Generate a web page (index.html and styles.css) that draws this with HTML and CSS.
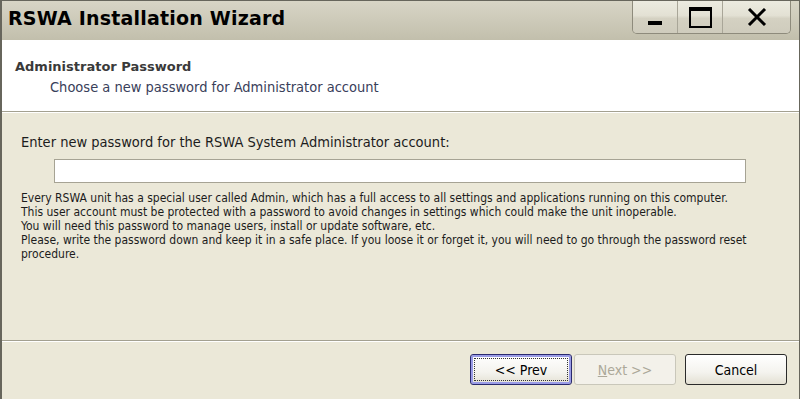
FILE: index.html
```html
<!DOCTYPE html>
<html lang="en">

<head>
    <meta charset="UTF-8">
    <title>RSWA Installation Wizard</title>
    <link rel="stylesheet" href="styles.css">
</head>

<body>

    <div class="window">

        <!-- Title bar -->
        <div class="titlebar">
            <h1 class="title">RSWA Installation Wizard</h1>
            <div class="caption-buttons">
                <div class="caption-btn min-btn"><span class="min-glyph"></span></div>
                <div class="caption-btn max-btn"><span class="max-glyph"></span></div>
                <div class="caption-btn close-btn">
                    <svg width="20" height="18" viewBox="0 0 20 18">
                        <path d="M2 1 L18 17 M18 1 L2 17" stroke="#000" stroke-width="3" fill="none" />
                    </svg>
                </div>
            </div>
        </div>

        <!-- Page header -->
        <div class="page-header">
            <h2>Administrator Password</h2>
            <p>Choose a new password for Administrator account</p>
        </div>

        <!-- Page content -->
        <div class="content">
            <label class="prompt" for="adminPassword">Enter new password for the RSWA System Administrator account:</label>
            <input type="password" id="adminPassword" class="password-input">
            <div class="info">
                <p>Every RSWA unit has a special user called Admin, which has a full access to all settings and applications running on this computer.</p>
                <p>This user account must be protected with a password to avoid changes in settings which could make the unit inoperable.</p>
                <p>You will need this password to manage users, install or update software, etc.</p>
                <p>Please, write the password down and keep it in a safe place. If you loose it or forget it, you will need to go through the password reset procedure.</p>
            </div>
        </div>

        <!-- Buttons -->
        <div class="footer">
            <button class="btn btn-default"><span class="focus">&lt;&lt; Prev</span></button>
            <button class="btn btn-disabled" disabled><u>N</u>ext &gt;&gt;</button>
            <button class="btn btn-cancel">Cancel</button>
        </div>

    </div>

</body>

</html>
```

FILE: styles.css
```css
* {
    margin: 0;
    padding: 0;
    box-sizing: border-box;
}

body {
    width: 800px;
    height: 399px;
    overflow: hidden;
    font-family: 'DejaVu Sans Condensed', 'DejaVu Sans', sans-serif;
    background: #ece9d8;
}

.window {
    display: flex;
    flex-direction: column;
    height: 399px;
    border-left: 2px solid #67665c;
    border-right: 1px solid #67665c;
    border-top: 1px solid #67665c;
    background: #ebe8d8;
}

/* Title bar */
.titlebar {
    display: flex;
    justify-content: space-between;
    height: 39px;
    background: linear-gradient(to bottom, #d8d5c6, #c2bfac);
}

.title {
    font-family: 'DejaVu Sans', sans-serif;
    font-weight: bold;
    font-size: 19px;
    color: #000;
    padding: 6px 0 0 6px;
    letter-spacing: 0.2px;
}

.caption-buttons {
    display: flex;
    height: 33px;
    margin-right: 8px;
    border: 1px solid #8e8b7c;
    border-top: none;
    border-radius: 0 0 5px 5px;
    overflow: hidden;
}

.caption-btn {
    display: flex;
    align-items: center;
    justify-content: center;
    background: linear-gradient(to bottom, #ecebe0 0%, #e3e1d4 45%, #d4d1c2 55%, #cfccbd 100%);
}

.min-btn {
    width: 45px;
    border-right: 1px solid #a9a698;
}

.max-btn {
    width: 45px;
    border-right: 1px solid #a9a698;
}

.close-btn {
    width: 67px;
}

.min-glyph {
    display: block;
    width: 14px;
    height: 4px;
    background: #000;
    margin-top: 12px;
}

.max-glyph {
    display: block;
    width: 23px;
    height: 21px;
    border: 2px solid #000;
    border-top-width: 4px;
}

/* Header */
.page-header {
    height: 72px;
    background: #fff;
    padding: 19px 0 0 13px;
    border-bottom: 1px solid #a3a090;
}

.page-header h2 {
    font-family: 'DejaVu Sans', sans-serif;
    font-size: 13px;
    font-weight: bold;
    color: #3a3a3a;
}

.page-header p {
    font-size: 14.5px;
    color: #39405a;
    margin: 5px 0 0 35px;
}

/* Content */
.content {
    flex: 1;
    display: flex;
    flex-direction: column;
    padding: 21px 0 0 19px;
    border-top: 1px solid #fff;
    border-bottom: 1px solid #a3a090;
}

.prompt {
    font-size: 14.5px;
    color: #1c1c1c;
}

.password-input {
    width: 692px;
    height: 24px;
    margin: 9px 0 0 33px;
    border: 1px solid #a6a394;
    background: #fff;
    outline: none;
}

.info {
    margin-top: 8px;
    font-size: 12px;
    line-height: 14px;
    color: #1c1c1c;
    padding-right: 20px;
}

/* Footer */
.footer {
    display: flex;
    justify-content: flex-end;
    align-items: flex-start;
    height: 58px;
    padding: 12px 12px 0 0;
    border-top: 1px solid #fff;
}

.btn {
    width: 102px;
    height: 31px;
    font-family: 'DejaVu Sans Condensed', 'DejaVu Sans', sans-serif;
    font-size: 14px;
    border-radius: 3px;
    background: linear-gradient(to bottom, #ffffff, #f4f3ee 60%, #e3e0d3);
    color: #000;
}

.btn-default {
    border: 1px solid #2a2a6e;
    box-shadow: inset 0 0 0 2px #9a9ce6;
    padding: 3px;
}

.focus {
    display: flex;
    align-items: center;
    justify-content: center;
    height: 100%;
    border: 1px dotted #333;
}

.btn-disabled {
    margin-left: 2px;
    border: 1px solid #c9c7ba;
    background: #f3f1ea;
    color: #aca899;
}

.btn-cancel {
    margin-left: 9px;
    border: 1px solid #2a2a2a;
}
```
